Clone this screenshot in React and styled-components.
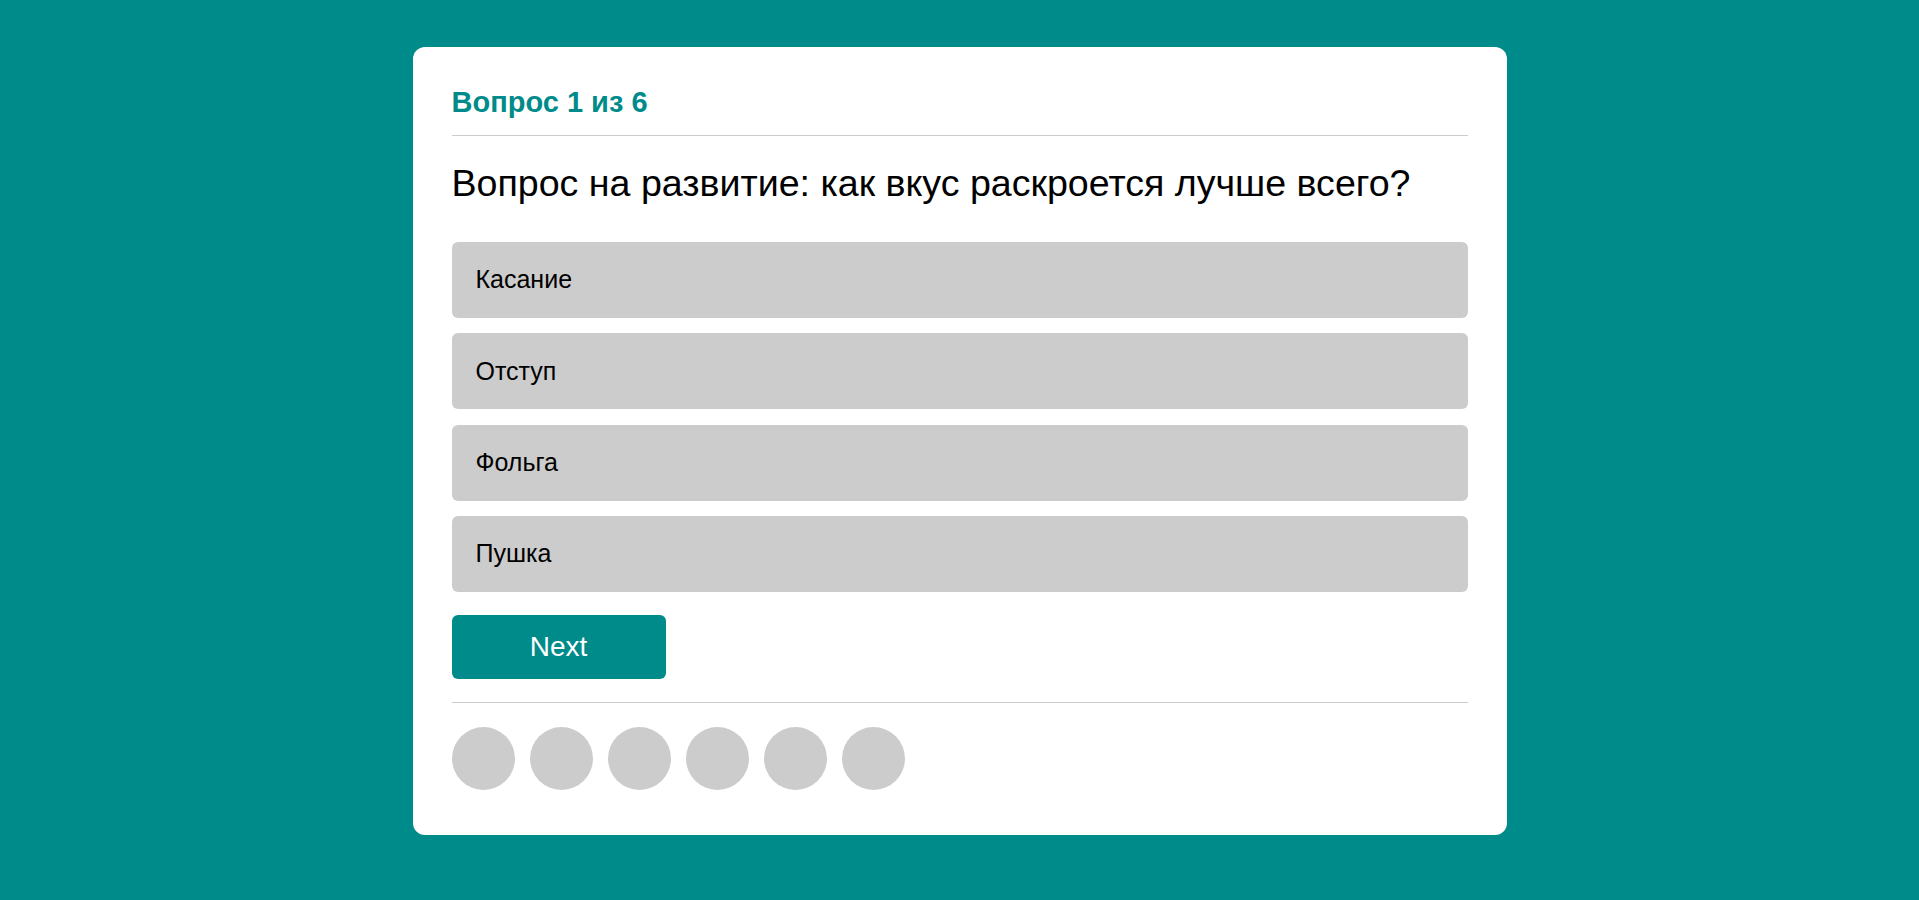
import React, { useState } from 'react';
import styled, { createGlobalStyle } from 'styled-components';

const GlobalStyle = createGlobalStyle`
    * {
        box-sizing: border-box;
    }

    body {
        margin: 0;
        background: #008b8b;
        font-family: "Liberation Sans", Arial, sans-serif;
    }
`;

const Page = styled.div`
    min-height: 900px;
    padding-top: 47px;
`;

const Card = styled.div`
    width: 1094px;
    margin: 0 auto;
    padding: 39px 39px 45px;
    background: #fff;
    border-radius: 12px;
`;

const Counter = styled.h2`
    margin: 0 0 16px;
    font-size: 29px;
    font-weight: bold;
    color: #008b8b;
`;

const Divider = styled.hr`
    margin: 0;
    border: none;
    border-top: 1px solid #ccc;
`;

const Question = styled.h1`
    margin: 26px 0 36.8px;
    font-size: 37.6px;
    font-weight: normal;
    color: #000;
`;

const Options = styled.div`
    display: grid;
    row-gap: 15.4px;
`;

const Option = styled.button`
    display: flex;
    align-items: center;
    height: 76px;
    padding: 0 24px;
    border: none;
    border-radius: 6px;
    background: ${({ selected }) => (selected ? '#a9d8d8' : '#ccc')};
    font-family: inherit;
    font-size: 25px;
    color: #000;
    text-align: left;
    cursor: pointer;
`;

const NextButton = styled.button`
    display: block;
    width: 214px;
    height: 64px;
    margin: 23px 0;
    border: none;
    border-radius: 6px;
    background: #008b8b;
    color: #fff;
    font-family: inherit;
    font-size: 28px;
    cursor: pointer;
`;

const Dots = styled.div`
    display: flex;
    gap: 15px;
    margin-top: 24px;
`;

const Dot = styled.span`
    width: 63px;
    height: 63px;
    border-radius: 50%;
    background: ${({ done }) => (done ? '#008b8b' : '#ccc')};
`;

const answers = ['Касание', 'Отступ', 'Фольга', 'Пушка'];

const App = () => {
    const [picked, setPicked] = useState(null);

    return (
        <Page>
            <GlobalStyle />
            <Card>
                <Counter>Вопрос 1 из 6</Counter>
                <Divider />
                <Question>Вопрос на развитие: как вкус раскроется лучше всего?</Question>
                <Options>
                    {answers.map((a, i) => (
                        <Option key={a} selected={picked === i} onClick={() => setPicked(i)}>
                            {a}
                        </Option>
                    ))}
                </Options>
                <NextButton>Next</NextButton>
                <Divider />
                <Dots>
                    {[0, 1, 2, 3, 4, 5].map(i => (
                        <Dot key={i} />
                    ))}
                </Dots>
            </Card>
        </Page>
    );
};

export default App;
